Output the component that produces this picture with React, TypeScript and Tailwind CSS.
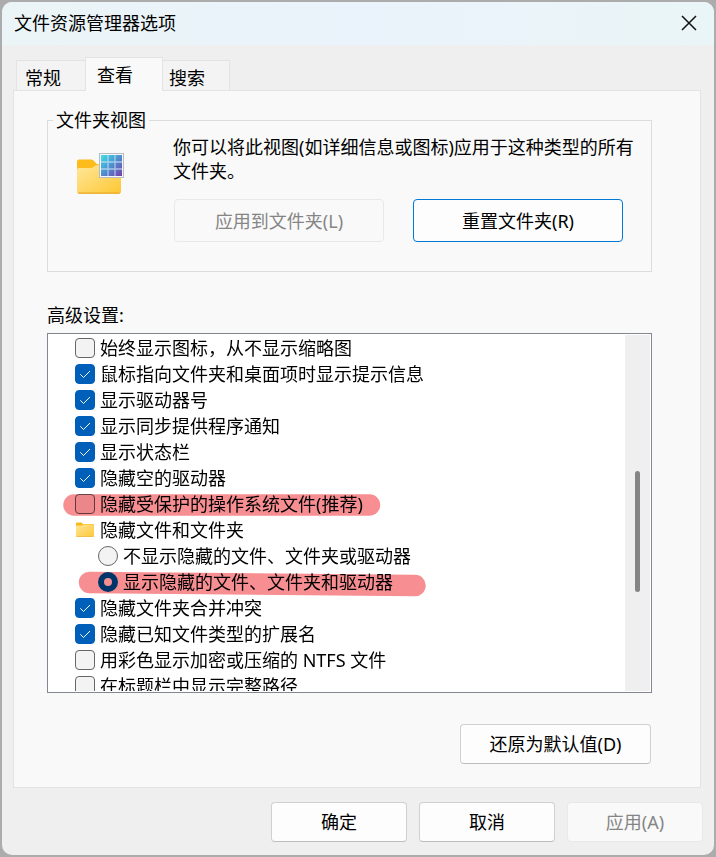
import { useState } from "react";

type Item = {
  kind: "checkbox" | "radio" | "folder";
  label: string;
  on?: boolean;
  mark?: "flat" | "slanted";
};

const items: Item[] = [
  { kind: "checkbox", label: "始终显示图标，从不显示缩略图" },
  { kind: "checkbox", label: "鼠标指向文件夹和桌面项时显示提示信息", on: true },
  { kind: "checkbox", label: "显示驱动器号", on: true },
  { kind: "checkbox", label: "显示同步提供程序通知", on: true },
  { kind: "checkbox", label: "显示状态栏", on: true },
  { kind: "checkbox", label: "隐藏空的驱动器", on: true },
  { kind: "checkbox", label: "隐藏受保护的操作系统文件(推荐)", mark: "flat" },
  { kind: "folder", label: "隐藏文件和文件夹" },
  { kind: "radio", label: "不显示隐藏的文件、文件夹或驱动器" },
  { kind: "radio", label: "显示隐藏的文件、文件夹和驱动器", on: true, mark: "slanted" },
  { kind: "checkbox", label: "隐藏文件夹合并冲突", on: true },
  { kind: "checkbox", label: "隐藏已知文件类型的扩展名", on: true },
  { kind: "checkbox", label: "用彩色显示加密或压缩的 NTFS 文件" },
  { kind: "checkbox", label: "在标题栏中显示完整路径" },
];

const tabs = ["常规", "查看", "搜索"];

const buttonBase = "rounded border text-center";
const buttonNormal = "border-[#d0d0d0] border-b-[#bcbcbc] bg-[#fdfdfd] text-black";
const buttonDisabled = "border-[#e8e8e8] bg-[#f9f9f9] text-[#858585]";

function FolderViewIcon() {
  return (
    <svg width="48" height="42" viewBox="0 0 48 42" aria-hidden="true">
      <defs>
        <linearGradient id="folder" x1="0" y1="0" x2="1" y2="1">
          <stop offset="0" stopColor="#ffe79c" />
          <stop offset="1" stopColor="#fdc732" />
        </linearGradient>
        <linearGradient id="tiles" x1="0" y1="0" x2="1" y2="1">
          <stop offset="0" stopColor="#3fe0e6" />
          <stop offset="0.5" stopColor="#4f8fd0" />
          <stop offset="1" stopColor="#7a3ca8" />
        </linearGradient>
      </defs>
      <path d="M0 8.500q0-2 2-2h12q1.500 0 2.500 1l3.500 3.500h22q2 0 2 2v8H0z" fill="#fbbc1c" />
      <path d="M0 17q0-2 2-2h12q1.500 0 2.500-1l2-1.500q1-.7 2-.7h21.500q2 0 2 2V38.500q0 2-2 2H2q-2 0-2-2z" fill="url(#folder)" />
      <path d="M.4 39.500q.6 1.300 2 1.300h39.200q1.400 0 2-1.300z" fill="#e9a820" />
      <rect x="22.500" y="0.500" width="24" height="24" fill="#f4f6f8" stroke="#b9bcc2" />
      <rect x="24" y="2" width="21" height="21" fill="url(#tiles)" />
      <path d="M31 2v21M38 2v21M24 9h21M24 16h21" stroke="#c9e4f5" strokeOpacity="0.7" strokeWidth="1.300" />
    </svg>
  );
}

function SmallFolder() {
  return (
    <svg width="20" height="20" viewBox="0 0 20 20" aria-hidden="true">
      <defs>
        <linearGradient id="small-folder" x1="0" y1="0" x2="1" y2="1">
          <stop offset="0" stopColor="#ffe596" />
          <stop offset="1" stopColor="#fdc93c" />
        </linearGradient>
      </defs>
      <path d="M1 3.500q0-1 1-1h4.500l1.500 1.500H18q1 0 1 1V8H1z" fill="#f9b81b" />
      <path d="M1 6.500q0-1 1-1h4.500L8.500 4.500H18q1 0 1 1V15.500q0 1-1 1H2q-1 0-1-1z" fill="url(#small-folder)" />
      <path d="M1 16h18q-.2.800-1 .8H2q-.8 0-1-.8z" fill="#eeb02c" />
    </svg>
  );
}

// Red highlighter stroke laid over a row
function Marker({ shape }: { shape: "flat" | "slanted" }) {
  return (
    <svg
      className="pointer-events-none absolute -top-px left-3 mix-blend-multiply"
      width="370"
      height="30"
      viewBox="0 0 370 30"
      aria-hidden="true"
    >
      {shape === "flat" ? (
        <path d="M14 15L309.500 15" stroke="#f78e92" strokeWidth="21.500" strokeLinecap="round" />
      ) : (
        <path d="M29.500 14.500L355 17.500" stroke="#f78e92" strokeWidth="21.500" strokeLinecap="round" />
      )}
    </svg>
  );
}

function SettingRow({ item }: { item: Item }) {
  if (item.kind === "folder") {
    return (
      <li className="flex h-[26px] items-center gap-[5px] pl-[27px]">
        <SmallFolder />
        <span>{item.label}</span>
      </li>
    );
  }
  const isRadio = item.kind === "radio";
  return (
    <li className="relative">
      <label className={`flex h-[26px] items-center gap-[5px] whitespace-nowrap ${isRadio ? "pl-[50px]" : "pl-[27px]"}`}>
        {isRadio ? (
          <input
            type="radio"
            name="hidden-files"
            defaultChecked={item.on}
            className="size-5 shrink-0 appearance-none rounded-full border border-[#666] bg-[#f3f3f3] checked:border-[6px] checked:border-[#005fb8] checked:bg-white"
          />
        ) : (
          <span className="grid shrink-0">
            <input
              type="checkbox"
              defaultChecked={item.on}
              className="peer size-5 appearance-none rounded border border-[#666] bg-[#f3f3f3] [grid-area:1/1] checked:border-[#005fb8] checked:bg-[#005fb8]"
            />
            <svg
              className="pointer-events-none invisible size-5 [grid-area:1/1] peer-checked:visible"
              viewBox="0 0 20 20"
              fill="none"
              aria-hidden="true"
            >
              <path d="M5.300 10.300L8.500 13.500L15 7" stroke="#fff" strokeWidth="1" />
            </svg>
          </span>
        )}
        <span>{item.label}</span>
      </label>
      {item.mark && <Marker shape={item.mark} />}
    </li>
  );
}

export default function App() {
  const [tab, setTab] = useState("查看");

  return (
    <div className="min-h-screen bg-[#acacac] p-[2px] font-['Noto_Sans','Noto_Sans_CJK_SC',sans-serif] text-[18px] leading-6 text-black">
      <main className="overflow-hidden rounded-[10px] bg-[#efefef]">
        <header className="flex h-[43px] items-center justify-between bg-linear-to-r from-[#ebf4f6] via-[#eaf3fb] to-[#eaf5f7] pr-4 pb-[2px] pl-3">
          <h1>文件资源管理器选项</h1>
          <button type="button" aria-label="关闭">
            <svg width="18" height="18" viewBox="0 0 18 18" aria-hidden="true">
              <path d="M2 2L16 16M16 2L2 16" stroke="#111" strokeWidth="1.500" />
            </svg>
          </button>
        </header>

        <div className="px-[11px] pt-3">
          <div role="tablist" className="flex items-end pl-[3px]">
            {tabs.map((name) => (
              <button
                key={name}
                type="button"
                role="tab"
                aria-selected={tab === name}
                onClick={() => setTab(name)}
                className={
                  tab === name
                    ? "relative z-10 -mx-px -mb-px h-[34px] w-[78px] border border-b-0 border-[#e3e3e3] bg-[#f9f9f9] pl-[11px] text-left"
                    : "h-[30px] w-[70px] border border-b-0 border-[#e3e3e3] bg-[#f3f3f3] pt-1 pl-2 text-left last:w-[68px] last:pl-[6px]"
                }
              >
                {name}
              </button>
            ))}
          </div>

          <div role="tabpanel" className="mr-[2px] border border-[#e3e3e3] bg-[#f9f9f9] pt-[17px] pr-[48px] pb-[23px] pl-[33px]">
            <fieldset className="border border-[#dcdcdc] px-[5px] pb-[29px]">
              <legend className="px-[3px]">文件夹视图</legend>
              <div className="flex gap-12 pt-[3px] pr-[10px] pl-6">
                <div className="shrink-0 pt-[18px]">
                  <FolderViewIcon />
                </div>
                <div className="min-w-0 grow">
                  <p>你可以将此视图(如详细信息或图标)应用于这种类型的所有文件夹。</p>
                  <div className="mt-4 mr-[13px] ml-px flex gap-[29px]">
                    <button type="button" disabled className={`h-[43px] grow basis-0 ${buttonBase} ${buttonDisabled}`}>
                      应用到文件夹(L)
                    </button>
                    <button type="button" className={`h-[43px] grow basis-0 ${buttonBase} border-[#0078d4] bg-[#fdfdfd]`}>
                      重置文件夹(R)
                    </button>
                  </div>
                </div>
              </div>
            </fieldset>

            <h2 id="advanced" className="mt-[31px]">高级设置:</h2>
            <div className="mt-[6px] flex h-[360px] border border-[#828790] bg-white p-px">
              <ul aria-labelledby="advanced" className="isolate -ml-px min-w-0 grow overflow-hidden bg-white">
                {items.map((item) => (
                  <SettingRow key={item.label} item={item} />
                ))}
              </ul>
              <div className="flex w-[25px] shrink-0 justify-center bg-[#efefef] pt-[136px]">
                <div className="h-[121px] w-[5px] rounded-full bg-[#858585]" />
              </div>
            </div>

            <div className="mt-[31px] flex justify-end pr-px">
              <button type="button" className={`h-10 w-[191px] ${buttonBase} ${buttonNormal}`}>
                还原为默认值(D)
              </button>
            </div>
          </div>
        </div>

        <footer className="flex justify-end gap-3 pt-[14px] pr-[11px] pb-[13px]">
          <button type="button" className={`h-10 w-[136px] ${buttonBase} ${buttonNormal}`}>
            确定
          </button>
          <button type="button" className={`h-10 w-[136px] ${buttonBase} ${buttonNormal}`}>
            取消
          </button>
          <button type="button" disabled className={`h-10 w-[136px] ${buttonBase} ${buttonDisabled}`}>
            应用(A)
          </button>
        </footer>
      </main>
    </div>
  );
}
